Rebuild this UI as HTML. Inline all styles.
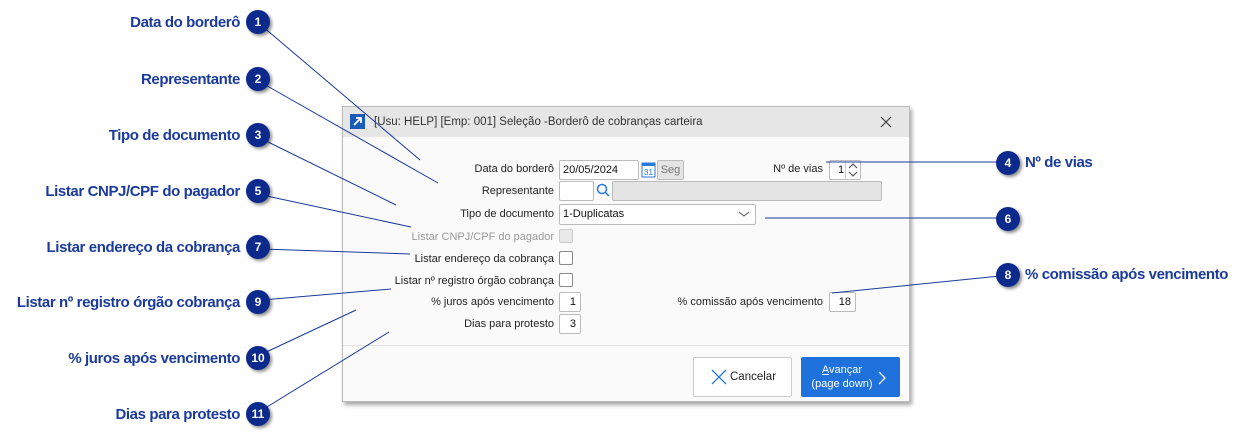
<!DOCTYPE html>
<html><head><meta charset="utf-8"><style>
body{margin:0;width:1247px;height:441px;background:#fff;position:relative;overflow:hidden;font-family:"Liberation Sans",sans-serif}
.a{position:absolute}
.lb{position:absolute;font-weight:bold;font-size:15px;color:#1a3a9c;white-space:nowrap;letter-spacing:-0.4px}
.lb.r{text-align:right}
.c{position:absolute;width:24px;height:24px;border-radius:50%;background:#0b2a8c;color:#fff;font-weight:bold;font-size:12px;text-align:center;line-height:24px;box-shadow:2px 2px 3px rgba(0,0,0,.45)}
.f{position:absolute;font-size:11px;color:#222;white-space:nowrap;text-align:right}
.in{position:absolute;background:#fff;border:1px solid #bbb;border-radius:2px;box-sizing:border-box;font-size:11px;color:#111;line-height:18px}
.cb{position:absolute;width:14px;height:14px;border:1px solid #888;border-radius:2px;box-sizing:border-box;background:#fff}
</style></head><body>
<div class="a" style="left:342px;top:106px;width:568px;height:296px;background:#fafafa;border:1px solid #bbb;box-sizing:border-box;box-shadow:2px 3px 4px rgba(0,0,0,.35)"></div>
<div class="a" style="left:343px;top:107px;width:566px;height:30px;background:#e6e6e6"></div>
<div class="a" style="left:350px;top:114px;width:15px;height:15px;background:#1a5bb8"></div>
<svg class="a" style="left:350px;top:114px" width="15" height="15"><path d="M4 11 L11 4 M6 4 H11 V9" stroke="#fff" stroke-width="1.8" fill="none"/></svg>
<div class="a" style="left:374px;top:116px;font-size:11.5px;color:#333">[Usu: HELP] [Emp: 001] Seleção -Borderô de cobranças carteira</div>
<svg class="a" style="left:880px;top:116px" width="12" height="12"><path d="M1 1 L11 11 M11 1 L1 11" stroke="#444" stroke-width="1.2"/></svg>
<div class="a" style="left:343px;top:345px;width:566px;height:1px;background:#e2e2e2"></div>

<div class="f" style="right:693px;top:163px">Data do borderô</div>
<div class="in" style="left:559px;top:160px;width:80px;height:20px;padding-left:3px">20/05/2024</div>
<svg class="a" style="left:641px;top:160px" width="15" height="18"><rect x="1" y="3" width="13" height="14" fill="#fff" stroke="#2a7ad8"/><rect x="1" y="3" width="13" height="3" fill="#2a7ad8"/><text x="7.5" y="15" font-size="8" text-anchor="middle" fill="#2a7ad8" font-family="Liberation Sans">31</text></svg>
<div class="in" style="left:657px;top:160px;width:27px;height:20px;background:#e4e4e4;color:#777;text-align:center">Seg</div>
<div class="f" style="right:424px;top:163px">Nº de vias</div>
<div class="in" style="left:829px;top:160px;width:32px;height:20px;padding-left:8px">1</div>
<div class="a" style="left:845px;top:161px;width:1px;height:18px;background:#ccc"></div>
<svg class="a" style="left:847px;top:162px" width="12" height="16"><path d="M2 6 L6 2 L10 6 M2 10 L6 14 L10 10" stroke="#444" fill="none"/></svg>

<div class="f" style="right:693px;top:185px">Representante</div>
<div class="in" style="left:559px;top:181px;width:35px;height:20px"></div>
<svg class="a" style="left:596px;top:183px" width="14" height="15"><circle cx="6" cy="6" r="4.5" stroke="#2a7ad8" stroke-width="1.5" fill="none"/><path d="M9.5 9.5 L13 13" stroke="#2a7ad8" stroke-width="1.5"/></svg>
<div class="in" style="left:612px;top:181px;width:270px;height:20px;background:#e4e4e4"></div>

<div class="f" style="right:693px;top:208px">Tipo de documento</div>
<div class="in" style="left:559px;top:204px;width:197px;height:21px;padding-left:3px">1-Duplicatas</div>
<svg class="a" style="left:738px;top:209px" width="12" height="10"><path d="M1 3 L6 7 L11 3" stroke="#555" fill="none"/></svg>

<div class="f" style="right:693px;top:231px;color:#999">Listar CNPJ/CPF do pagador</div>
<div class="cb" style="left:559px;top:229px;background:#e8e8e8;border-color:#ccc"></div>
<div class="f" style="right:693px;top:253px">Listar endereço da cobrança</div>
<div class="cb" style="left:559px;top:251px"></div>
<div class="f" style="right:693px;top:275px">Listar nº registro órgão cobrança</div>
<div class="cb" style="left:559px;top:273px"></div>
<div class="f" style="right:693px;top:296px">% juros após vencimento</div>
<div class="in" style="left:559px;top:292px;width:22px;height:20px;text-align:right;padding-right:4px">1</div>
<div class="f" style="right:424px;top:296px">% comissão após vencimento</div>
<div class="in" style="left:829px;top:292px;width:27px;height:20px;text-align:right;padding-right:4px">18</div>
<div class="f" style="right:693px;top:318px">Dias para protesto</div>
<div class="in" style="left:559px;top:314px;width:22px;height:20px;text-align:right;padding-right:4px">3</div>

<div class="a" style="left:693px;top:357px;width:99px;height:40px;border:1px solid #ccc;background:#fff;box-sizing:border-box;border-radius:2px"></div>
<svg class="a" style="left:711px;top:369px" width="16" height="16"><path d="M1 1 L15 15 M15 1 L1 15" stroke="#2a7ad8" stroke-width="1.3"/></svg>
<div class="a" style="left:730px;top:371px;font-size:11.5px;color:#222">Cancelar</div>
<div class="a" style="left:801px;top:357px;width:99px;height:40px;background:#1f72dc;border-radius:2px"></div>
<div class="a" style="left:807px;top:363px;width:70px;font-size:11px;color:#fff;text-align:center;line-height:14px"><u>A</u>vançar<br>(page down)</div>
<svg class="a" style="left:877px;top:370px" width="10" height="16"><path d="M2 2 L8 8 L2 14" stroke="#fff" stroke-width="1.3" fill="none"/></svg>

<svg class="a" style="left:0;top:0" width="1247" height="441"><g stroke="#1a3a9c" stroke-width="1" fill="none">
<path d="M262 26 L420 160"/><path d="M262 83 L438 183"/><path d="M262 139 L396 205"/><path d="M262 195 L411 227"/><path d="M262 249 L410 254"/><path d="M262 300 L391 289"/><path d="M262 354 L356 310"/><path d="M262 410 L389 332"/>
<path d="M1000 162 L826 162"/><path d="M1000 218 L765 218"/><path d="M1000 276 L832 293"/></g></svg>

<div class="lb r" style="right:1007px;top:14px">Data do borderô</div><div class="c" style="left:246px;top:10px">1</div>
<div class="lb r" style="right:1007px;top:71px">Representante</div><div class="c" style="left:246px;top:67px">2</div>
<div class="lb r" style="right:1007px;top:127px">Tipo de documento</div><div class="c" style="left:246px;top:123px">3</div>
<div class="lb r" style="right:1007px;top:183px">Listar CNPJ/CPF do pagador</div><div class="c" style="left:246px;top:179px">5</div>
<div class="lb r" style="right:1007px;top:239px">Listar endereço da cobrança</div><div class="c" style="left:246px;top:235px">7</div>
<div class="lb r" style="right:1007px;top:294px">Listar nº registro órgão cobrança</div><div class="c" style="left:246px;top:290px">9</div>
<div class="lb r" style="right:1007px;top:350px">% juros após vencimento</div><div class="c" style="left:246px;top:346px">10</div>
<div class="lb r" style="right:1007px;top:406px">Dias para protesto</div><div class="c" style="left:246px;top:402px">11</div>
<div class="c" style="left:996px;top:151px">4</div><div class="lb" style="left:1025px;top:154px">Nº de vias</div>
<div class="c" style="left:996px;top:207px">6</div>
<div class="c" style="left:996px;top:263px">8</div><div class="lb" style="left:1025px;top:266px">% comissão após vencimento</div>
</body></html>
